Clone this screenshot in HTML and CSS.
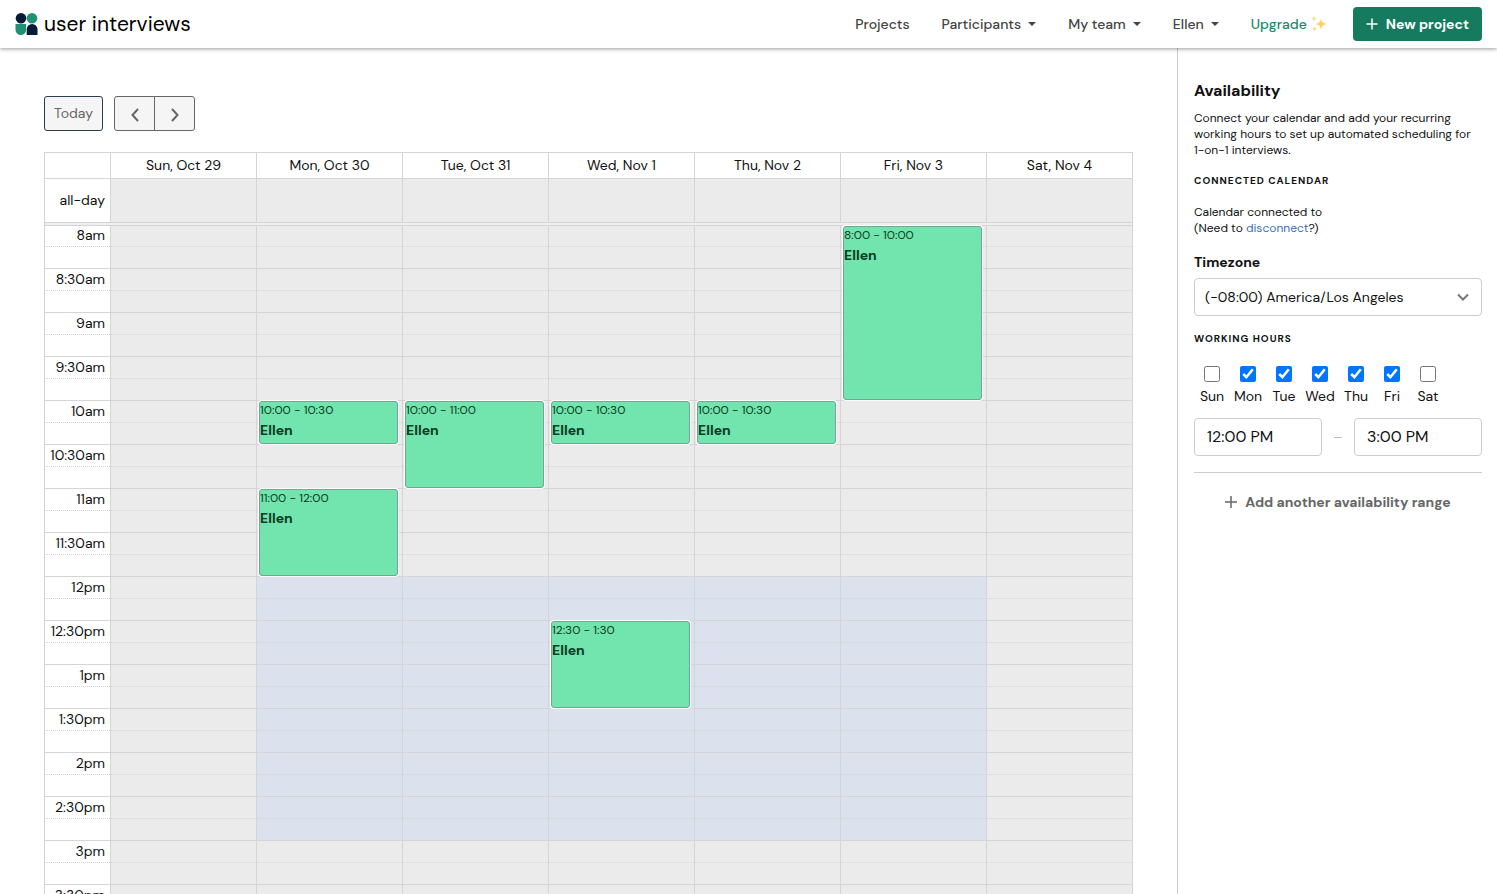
FILE: index.html
```html
<!DOCTYPE html>
<html lang="en">
<head>
    <meta charset="UTF-8">
    <meta name="viewport" content="width=device-width, initial-scale=1.0">
    <title>Availability - User Interviews</title>
    <link rel="stylesheet" href="styles.css">
</head>
<body>

    <header class="navbar">
        <a href="#" class="logo">
            <svg class="logo-mark" viewBox="0 0 22 22" aria-hidden="true">
                <circle cx="5.5" cy="5.3" r="5.3" fill="#061b38"/>
                <circle cx="16.5" cy="5.3" r="5.3" fill="#1f9274"/>
                <path d="M0 11h10.6v5.700a5.300 5.300 0 0 1-10.600 0z" fill="#1f9274"/>
                <path d="M11.200 22v-5.700a5.400 5.400 0 0 1 10.800 0v5.700z" fill="#061b38"/>
            </svg>
            <span>user interviews</span>
        </a>
        <nav class="nav-links">
            <a href="#">Projects</a>
            <a href="#" class="has-menu">Participants</a>
            <a href="#" class="has-menu">My team</a>
            <a href="#" class="has-menu">Ellen</a>
            <a href="#" class="upgrade">Upgrade
                <svg width="18" height="18" viewBox="0 0 18 18" aria-hidden="true">
                    <path d="M11 3.500q.8 4.700 5.800 5.500q-5 .8-5.800 5.800q-.8-5-5.300-5.800q4.500-.8 5.300-5.500z" fill="#fbd46a"/>
                    <path d="M4 1q.4 2.200 2.500 2.700q-2.100.4-2.500 2.600q-.4-2.200-2.500-2.600q2.100-.5 2.500-2.700zM4.500 11.500q.4 2 2.300 2.400q-1.900.4-2.300 2.400q-.4-2-2.300-2.400q1.900-.4 2.300-2.400z" fill="#fbdc8c"/>
                </svg>
            </a>
            <button type="button" class="new-project">
                <svg width="12" height="12" viewBox="0 0 12 12" aria-hidden="true">
                    <path d="M6 .5v11M.5 6h11" stroke="currentColor" stroke-width="1.500"/>
                </svg>
                New project
            </button>
        </nav>
    </header>

    <main class="page">
        <section class="calendar-pane">
            <div class="toolbar">
                <button type="button" class="tool-button today">Today</button>
                <div class="button-group">
                    <button type="button" class="tool-button" aria-label="Previous week">
                        <svg width="8" height="14" viewBox="0 0 8 14" aria-hidden="true"><path d="M7 1L1.500 7L7 13" fill="none" stroke="currentColor" stroke-width="2"/></svg>
                    </button>
                    <button type="button" class="tool-button" aria-label="Next week">
                        <svg width="8" height="14" viewBox="0 0 8 14" aria-hidden="true"><path d="M1 1L6.500 7L1 13" fill="none" stroke="currentColor" stroke-width="2"/></svg>
                    </button>
                </div>
            </div>

            <table class="calendar">
                <thead>
                    <tr class="days">
                        <th class="axis"></th>
                        <th>Sun, Oct 29</th>
                        <th>Mon, Oct 30</th>
                        <th>Tue, Oct 31</th>
                        <th>Wed, Nov 1</th>
                        <th>Thu, Nov 2</th>
                        <th>Fri, Nov 3</th>
                        <th>Sat, Nov 4</th>
                    </tr>
                    <tr class="all-day">
                        <th class="axis">all-day</th>
                        <td></td><td></td><td></td><td></td><td></td><td></td><td></td>
                    </tr>
                    <tr class="divider"><td colspan="8"></td></tr>
                </thead>
                <tbody id="slots"></tbody>
            </table>
        </section>

        <aside class="sidebar">
            <h2>Availability</h2>
            <p class="intro">Connect your calendar and add your recurring working hours to set up automated scheduling for 1-on-1 interviews.</p>

            <h3>Connected calendar</h3>
            <p class="connected">Calendar connected to<br>(Need to <a href="#">disconnect</a>?)</p>

            <label class="field-label" for="timezone">Timezone</label>
            <div class="select-wrap">
                <select id="timezone">
                    <option>(-08:00) America/Los Angeles</option>
                </select>
                <svg class="chevron" width="12" height="8" viewBox="0 0 12 8" aria-hidden="true"><path d="M1 1.500L6 6.500L11 1.500" fill="none" stroke="#777" stroke-width="2"/></svg>
            </div>

            <h3>Working hours</h3>
            <div class="weekdays">
                <label><input type="checkbox">Sun</label>
                <label><input type="checkbox" checked>Mon</label>
                <label><input type="checkbox" checked>Tue</label>
                <label><input type="checkbox" checked>Wed</label>
                <label><input type="checkbox" checked>Thu</label>
                <label><input type="checkbox" checked>Fri</label>
                <label><input type="checkbox">Sat</label>
            </div>
            <div class="hours">
                <input type="text" value="12:00 PM" aria-label="Start time">
                <span>–</span>
                <input type="text" value="3:00 PM" aria-label="End time">
            </div>
            <button type="button" class="add-range">
                <svg width="12" height="12" viewBox="0 0 12 12" aria-hidden="true">
                    <path d="M6 0v12M0 6h12" stroke="currentColor" stroke-width="1.500"/>
                </svg>
                Add another availability range
            </button>
        </aside>
    </main>

    <script>
        // Times are in minutes from midnight, day 0 is Sunday
        const slotMinutes = 15;
        const dayStart = 8 * 60;
        const dayEnd = 18 * 60;
        const workingHours = { days: [1, 2, 3, 4, 5], start: 12 * 60, end: 15 * 60 };

        const events = [
            { day: 1, start: 600, end: 630, title: 'Ellen' },
            { day: 1, start: 660, end: 720, title: 'Ellen' },
            { day: 2, start: 600, end: 660, title: 'Ellen' },
            { day: 3, start: 600, end: 630, title: 'Ellen' },
            { day: 3, start: 750, end: 810, title: 'Ellen' },
            { day: 4, start: 600, end: 630, title: 'Ellen' },
            { day: 5, start: 480, end: 600, title: 'Ellen' }
        ];

        function formatTime(time) {
            const hour = Math.floor(time / 60) % 12 || 12;
            return hour + ':' + String(time % 60).padStart(2, '0');
        }

        function axisLabel(time) {
            const text = time % 60 === 0 ? formatTime(time).split(':')[0] : formatTime(time);
            return text + (time < 720 ? 'am' : 'pm');
        }

        // Build one row for each slot
        let rows = '';
        for (let time = dayStart; time < dayEnd; time += slotMinutes) {
            const isLabelled = time % 30 === 0;
            rows += `<tr class="${isLabelled ? 'slot' : 'slot minor'}">`;
            rows += `<th class="axis">${isLabelled ? axisLabel(time) : ''}</th>`;
            for (let day = 0; day < 7; day++) {
                const isOpen = workingHours.days.includes(day) && time >= workingHours.start && time < workingHours.end;
                const event = events.find(e => e.day === day && e.start === time);
                rows += `<td class="${isOpen ? 'open' : ''}">`;
                if (event) {
                    const slots = (event.end - event.start) / slotMinutes;
                    rows += `<a href="#" class="event" style="--slots: ${slots}">
                        <span class="event-time">${formatTime(event.start)} - ${formatTime(event.end)}</span>
                        <span class="event-title">${event.title}</span>
                    </a>`;
                }
                rows += '</td>';
            }
            rows += '</tr>';
        }
        document.getElementById('slots').innerHTML = rows;
    </script>

</body>
</html>
```
FILE: styles.css
```css
/* Basic Reset */
* {
    margin: 0;
    padding: 0;
    box-sizing: border-box;
}

body {
    font-family: 'DM Sans', 'Inter', sans-serif;
    font-size: 14px;
    line-height: 20px;
    color: #111;
    background-color: #fff;
    height: 100vh;
    display: flex;
    flex-direction: column;
    overflow: hidden;
}

button,
input,
select {
    font: inherit;
    color: inherit;
}

a {
    text-decoration: none;
}

/* Top bar */
.navbar {
    display: flex;
    justify-content: space-between;
    align-items: center;
    flex: none;
    height: 48px;
    padding: 0 15px;
    background-color: #fff;
    box-shadow: 0 1px 4px rgba(0, 0, 0, 0.4);
    z-index: 1;
}

.logo {
    display: flex;
    align-items: center;
    gap: 6px;
    font-size: 21px;
    color: #000;
}

.logo-mark {
    width: 23px;
    height: 22px;
}

.nav-links {
    display: flex;
    align-items: center;
    gap: 32px;
}

.nav-links a {
    display: flex;
    align-items: center;
    font-weight: 500;
    color: #444;
}

.nav-links .has-menu::after {
    content: "";
    margin-left: 7px;
    border: 4px solid transparent;
    border-top-color: #444;
    border-bottom: none;
}

.nav-links .upgrade {
    gap: 3px;
    margin-right: -7px;
    color: #1b8a68;
}

.new-project {
    display: flex;
    align-items: center;
    gap: 8px;
    height: 34px;
    padding: 0 13px;
    border: none;
    border-radius: 4px;
    background-color: #167a5e;
    color: #fff;
    font-weight: 700;
    cursor: pointer;
}

.page {
    display: flex;
    flex: 1;
    min-height: 0;
}

/* Calendar */
.calendar-pane {
    flex: 1;
    padding: 48px 44px 0;
    overflow-y: auto;
    scrollbar-width: none;
}

.toolbar {
    display: flex;
    gap: 11px;
    margin-bottom: 21px;
}

.tool-button {
    display: flex;
    justify-content: center;
    align-items: center;
    width: 41px;
    height: 35px;
    padding-top: 2px;
    border: 1px solid #666;
    border-radius: 3px;
    background-color: #f5f5f5;
    color: #666;
    cursor: pointer;
}

.today {
    width: 59px;
    padding: 0 0 2px;
    border-color: #2c3e50;
}

.button-group {
    display: flex;
}

.button-group .tool-button:first-child {
    border-radius: 3px 0 0 3px;
}

.button-group .tool-button:last-child {
    margin-left: -1px;
    border-radius: 0 3px 3px 0;
}

.calendar {
    width: 100%;
    table-layout: fixed;
    border-collapse: separate;
    border-spacing: 0;
    border-right: 1px solid #d5d5d5;
}

.calendar th,
.calendar td {
    border-top: 1px solid #d5d5d5;
    border-left: 1px solid #d5d5d5;
    font-weight: 400;
}

.calendar th {
    padding-bottom: 2px;
    line-height: 18px;
}

.calendar td {
    background-color: #ebebeb;
}

.calendar .axis {
    width: 66px;
    padding-right: 5px;
    text-align: right;
    white-space: nowrap;
}

.days th {
    height: 26px;
}

.all-day th {
    height: 44px;
}

.calendar .divider td {
    height: 3px;
    background-color: #eee;
}

.slot th,
.slot td {
    height: 22px;
}

.slot:first-child th,
.slot:first-child td {
    height: 21px;
}

.calendar .minor th,
.calendar .minor td {
    border-top-style: dotted;
}

.slot td {
    position: relative;
}

.calendar td.open {
    background-color: #dbe2ee;
}

/* Events lie over the slots they last for */
.event {
    position: absolute;
    top: 0;
    left: 2px;
    right: 4px;
    height: calc(var(--slots) * 22px - 1px);
    border: 1px solid #74a590;
    border-radius: 3px;
    background-color: #72e4ad;
    box-shadow: 0 0 0 1px #fff;
    color: #073b22;
    overflow: hidden;
    z-index: 1;
}

.slot:first-child .event {
    height: calc(var(--slots) * 22px - 2px);
}

.event span {
    display: block;
}

.event-time {
    margin-bottom: 2px;
    font-size: 12px;
    line-height: 16px;
}

.event-title {
    font-weight: 700;
}

/* Sidebar */
.sidebar {
    flex: none;
    width: 320px;
    padding: 33px 15px 0 16px;
    border-left: 1px solid #ccc;
}

.sidebar h2 {
    margin-bottom: 9px;
    font-size: 16px;
    line-height: 20px;
}

.sidebar h3 {
    font-size: 10px;
    line-height: 16px;
    letter-spacing: 1px;
    text-transform: uppercase;
}

.intro,
.connected {
    font-size: 12px;
    line-height: 16px;
}

.intro {
    margin-bottom: 15px;
}

.connected {
    margin: 15px 0 16px;
}

.connected a {
    color: #3b6fb8;
}

.field-label {
    display: block;
    margin-bottom: 6px;
    font-weight: 700;
}

.select-wrap {
    position: relative;
    margin-bottom: 15px;
}

.select-wrap select {
    display: block;
    width: 100%;
    height: 38px;
    padding: 0 10px;
    border: 1px solid #ccc;
    border-radius: 4px;
    background-color: #fff;
    appearance: none;
}

.chevron {
    position: absolute;
    top: 15px;
    right: 13px;
    pointer-events: none;
}

.weekdays {
    display: flex;
    margin: 19px 0 12px;
}

.weekdays label {
    display: flex;
    flex-direction: column;
    align-items: center;
    gap: 4px;
    width: 36px;
}

.weekdays input {
    width: 16px;
    height: 16px;
}

.hours {
    display: flex;
    justify-content: space-between;
    align-items: center;
    padding-bottom: 16px;
    border-bottom: 1px solid #ccc;
    color: #bbb;
}

.hours input {
    width: 128px;
    height: 38px;
    padding: 0 12px 2px;
    border: 1px solid #ccc;
    border-radius: 4px;
    font-size: 16px;
    color: #111;
}

.add-range {
    display: flex;
    justify-content: center;
    align-items: center;
    gap: 8px;
    width: 100%;
    margin-top: 19px;
    border: none;
    background: none;
    color: #666;
    font-weight: 700;
    cursor: pointer;
}
```
